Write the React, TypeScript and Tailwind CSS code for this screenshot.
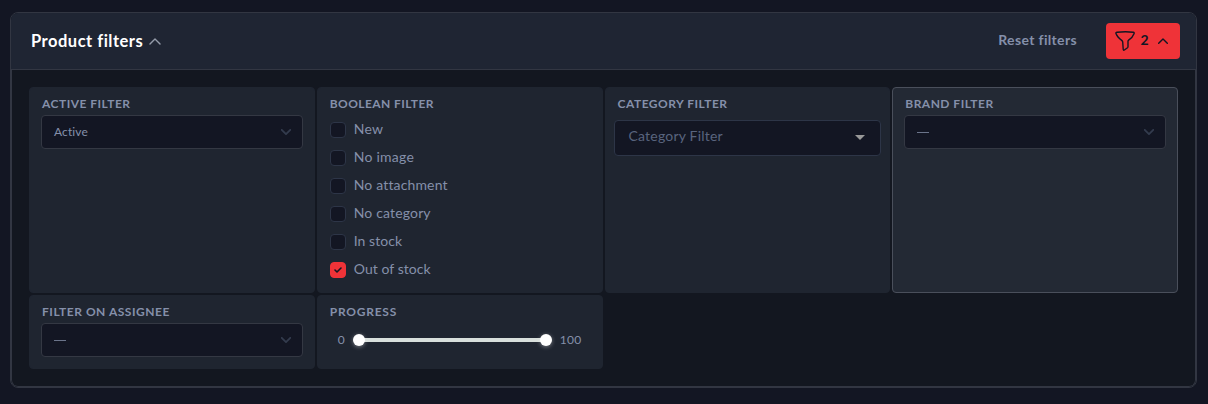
import type { ReactNode } from "react";

function Chevron({ up = false, className = "" }: { up?: boolean; className?: string }) {
  return (
    <svg className={className} viewBox="0 0 10 6" fill="none" stroke="currentColor" strokeLinecap="round" strokeLinejoin="round">
      <path d={up ? "M0.7 5.2 5 0.9 9.3 5.2" : "M0.7 0.8 5 5.1 9.3 0.8"} />
    </svg>
  );
}

function Panel({ title, spacing, active = false, children }: { title: string; spacing: string; active?: boolean; children: ReactNode }) {
  return (
    <section
      className={
        "rounded-[4px] border px-[11px] pt-[8px] " +
        (active ? "border-[#4a4f5b] bg-[#232934]" : "border-[#1f2530] bg-[#1f2530]")
      }
    >
      <h3 className={"h-4 whitespace-nowrap pl-px text-[12px] leading-4 font-bold uppercase " + spacing}>{title}</h3>
      {children}
    </section>
  );
}

function Select({ value }: { value: string }) {
  return (
    <button className="mt-[3px] flex h-[34px] w-[262px] items-center justify-between rounded-[4px] border border-[#343843] bg-[#131623] pr-[11px] pl-3 text-[12px] tracking-[0.1px]">
      {value ? <span>{value}</span> : <span className="mt-px h-px w-3 bg-[#6b748a]" />}
      <Chevron className="h-[6px] w-[10px] stroke-[1.8] text-[#333b4d]" />
    </button>
  );
}

const options = [
  { label: "New", checked: false, spacing: "tracking-[0.2px]" },
  { label: "No image", checked: false, spacing: "tracking-[0.25px]" },
  { label: "No attachment", checked: false, spacing: "tracking-[0.15px]" },
  { label: "No category", checked: false, spacing: "tracking-[0.15px]" },
  { label: "In stock", checked: false, spacing: "tracking-[0.05px]" },
  { label: "Out of stock", checked: true, spacing: "tracking-[0.05px]" },
];

export default function App() {
  return (
    <main className="h-[404px] bg-[#131623] pt-3 pl-[10px] font-['Lato','Noto_Sans',sans-serif] text-[#8590aa]">
      <div className="h-[376px] w-[1187px] overflow-hidden rounded-[8px] border border-[#323642] bg-[#131720]">
        <header className="flex h-[57px] items-center justify-between border-b border-[#323642] bg-[#1f2533] pr-4 pl-5">
          <div className="flex items-center">
            <h2 className="w-[118px] whitespace-nowrap text-[16.5px] leading-6 font-bold tracking-[0.5px] text-white">Product filters</h2>
            <Chevron up className="h-[7px] w-[12px] stroke-[1.2] text-[#949ba9]" />
          </div>
          <div className="flex items-center gap-[29px]">
            <button className="-mt-[2px] text-[14px] leading-5 font-bold whitespace-nowrap tracking-[0.35px]">Reset filters</button>
            <button className="flex h-9 w-[74px] items-center rounded-[4px] bg-[#ef3338] pl-[9px] text-[#131623]">
              <svg className="size-5" viewBox="0 0 20 20" fill="none" stroke="currentColor" strokeWidth="1.4" strokeLinejoin="round">
                <path d="M1 2.5C.7 1.8 1 1.3 2 1.2C7 .7 14 .7 18.3 1.2C19.2 1.3 19.4 1.9 19 2.7C18 5.4 16 7.6 13.6 9.2Q13 9.6 13 10.4V15.7Q13 16.3 12.5 16.7L9.4 19Q8.3 19.6 8.2 18.3L7.7 11Q7.7 10.2 7 9.6C4.2 7.5 1.9 5.4 1 2.5Z" />
              </svg>
              <span className="-mt-[2px] ml-[5px] w-[9px] text-[14px] leading-5 font-bold">2</span>
              <Chevron up className="ml-[9px] h-[6px] w-[10px] stroke-[1.4]" />
            </button>
          </div>
        </header>
        <div className="grid h-[317px] grid-cols-4 grid-rows-[206px_74px] gap-[2px] rounded-b-[7px] border border-t-0 border-[#323642] p-[17px]">
          <Panel title="Active filter" spacing="tracking-[0.48px]">
            <Select value="Active" />
          </Panel>
          <Panel title="Boolean filter" spacing="tracking-[0.42px]">
            <ul className="mt-[7px] pl-px">
              {options.map((option) => (
                <li key={option.label} className="flex h-7 items-start gap-2">
                  <span
                    className={
                      "mt-[3px] flex size-4 shrink-0 items-center justify-center rounded-[4px] border " +
                      (option.checked ? "border-[#ef3338] bg-[#ef3338]" : "border-[#2d3547] bg-[#131623]")
                    }
                  >
                    {option.checked && (
                      <svg className="h-[6px] w-2" viewBox="0 0 8 6" fill="none" stroke="#131623" strokeWidth="1.6" strokeLinecap="round" strokeLinejoin="round">
                        <path d="M1 3 3 5 7 1" />
                      </svg>
                    )}
                  </span>
                  <span className={"text-[14px] leading-[20px] whitespace-nowrap " + option.spacing}>{option.label}</span>
                </li>
              ))}
            </ul>
          </Panel>
          <Panel title="Category filter" spacing="tracking-[0.5px]">
            <button className="mt-2 -ml-[3px] flex h-9 w-[267px] items-center justify-between rounded-[4px] border border-[#2d3547] bg-[#131623] pr-[15px] pb-[3px] pl-[14px] text-[14px] leading-5 tracking-[0.2px] text-[#59647e]">
              <span className="-mt-px">Category Filter</span>
              <svg className="mt-[2px] h-[5px] w-[10px] fill-[#999999]" viewBox="0 0 10 5">
                <path d="M0 0h10L5 5z" />
              </svg>
            </button>
          </Panel>
          <Panel title="Brand filter" spacing="tracking-[0.48px]" active>
            <Select value="" />
          </Panel>
          <Panel title="Filter on assignee" spacing="tracking-[0.52px]">
            <Select value="" />
          </Panel>
          <Panel title="Progress" spacing="tracking-[0.75px]">
            <div className="mt-[12px] flex h-4 items-center pl-[9px] text-[12px] leading-4">
              <span className="w-[15px]">0</span>
              <div className="flex h-3 w-[199px] items-center">
                <span className="z-10 size-3 shrink-0 rounded-full bg-white shadow-[0_1px_4px_#ffffff66]" />
                <span className="-mx-1 h-1 grow bg-[#d8dfdc]" />
                <span className="z-10 size-3 shrink-0 rounded-full bg-white shadow-[0_1px_4px_#ffffff66]" />
              </div>
              <span className="ml-2 tracking-[0.3px]">100</span>
            </div>
          </Panel>
        </div>
      </div>
    </main>
  );
}
